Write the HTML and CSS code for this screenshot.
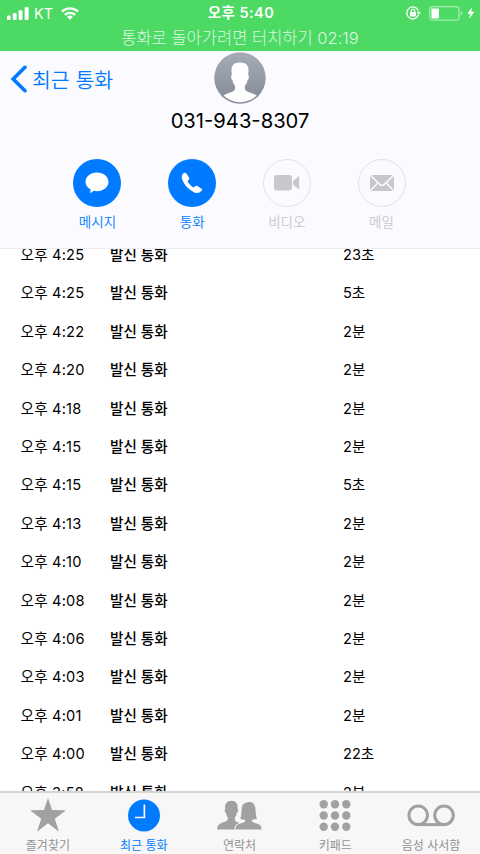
FILE: index.html
```html
<!DOCTYPE html>
<html lang="ko">
<head>
<meta charset="utf-8">
<title>최근 통화</title>
<link rel="stylesheet" href="styles.css">
</head>
<body>
<div class="phone">
  <header class="status">
    <div class="status-row">
      <div class="status-left">
        <svg class="signal" width="22" height="13" viewBox="0 0 22 13" fill="#fff"><rect x="0" y="8.5" width="3.6" height="4.5" rx="1"/><rect x="5.8" y="6" width="3.8" height="7" rx="1"/><rect x="11.6" y="3.2" width="3.8" height="9.8" rx="1"/><rect x="17.6" y="0" width="4" height="13" rx="1"/></svg>
        <span class="carrier">KT</span>
        <svg class="wifi" width="18" height="13" viewBox="0 0 18 13"><g fill="none" stroke="#fff" stroke-width="2.3"><path d="M.9 4.6a11.6 11.6 0 0 1 16.2 0"/><path d="M3.9 8a7.3 7.3 0 0 1 10.2 0"/></g><path d="M9 12.8 6.1 9.9a4.1 4.1 0 0 1 5.8 0z" fill="#fff"/></svg>
      </div>
      <span class="clock">오후 5:40</span>
      <div class="status-right">
        <svg width="15" height="14" viewBox="0 0 15 14"><path d="M12.6 8.4A6 6 0 1 1 12.3 4.6" fill="none" stroke="#fff" stroke-width="1.3"/><path d="M10.7 5.8H15l-2.2 2.9z" fill="#fff"/><rect x="4" y="6.1" width="5.9" height="4.3" rx=".6" fill="#fff"/><path d="M5.2 6.4V5a1.75 1.75 0 0 1 3.5 0v1.4" fill="none" stroke="#fff" stroke-width="1.1"/></svg>
        <svg class="battery" width="34" height="15" viewBox="0 0 34 15"><rect x=".7" y=".7" width="29.3" height="13.4" rx="2.7" fill="none" stroke="#fff" stroke-opacity=".5" stroke-width="1.2"/><rect x="2.4" y="2.4" width="7.6" height="10" rx=".8" fill="#fff"/><path d="M31.6 5q1.8.8 1.8 2.4t-1.8 2.4z" fill="#fff" fill-opacity=".5"/></svg>
        <svg class="bolt" width="8" height="12" viewBox="0 0 8 12"><path d="M5.3 0 .2 6.8h3.1L1.9 12l5.6-7.2H4.3z" fill="#fff"/></svg>
      </div>
    </div>
    <div class="return-call">통화로 돌아가려면 터치하기 02:19</div>
  </header>

  <section class="contact">
    <div class="back"><svg width="17" height="28" viewBox="0 0 17 28"><path d="M15 2.3 3.2 14 15 25.7" fill="none" stroke="#007aff" stroke-width="3.6" stroke-linecap="round"/></svg><span>최근 통화</span></div>
    <svg class="avatar" width="52" height="52" viewBox="0 0 52 52"><defs><linearGradient id="shade" x2="0" y2="1"><stop stop-color="#a5abb8"/><stop offset="1" stop-color="#858a96"/></linearGradient><clipPath id="disc"><circle cx="26" cy="26" r="24.2"/></clipPath></defs><circle cx="26" cy="26" r="25.7" fill="url(#shade)"/><path clip-path="url(#disc)" fill="#fff" d="M26 10.5c5.800 0 8.800 3 8.500 8.200-.1 2-.3 3-.3 4.300 1.100.2.800 4.800-.8 5.200-.4 3-1.300 4.300-2.500 5.600-.3 3.200.2 4.800 2.300 5.700 4 1.500 7 2.300 10 4.500V52H8.800v-8c3-2.200 6-3 10-4.500 2.100-.9 2.600-2.500 2.300-5.700-1.200-1.300-2.100-2.600-2.500-5.600-1.600-.4-1.900-5-.8-5.200 0-1.300-.2-2.300-.3-4.300-.3-5.200 2.700-8.200 8.500-8.200z"/></svg>
    <div class="number">031-943-8307</div>
    <nav class="actions">
      <div class="action"><div class="disc"><svg width="24" height="22" viewBox="0 0 24 22"><path d="M12 .5c6.400 0 11.500 4.100 11.500 9.300S18.400 19.200 12 19.200c-1.200 0-2.300-.1-3.400-.4-1 1.200-2.500 2-3.900 2.100.7-.8 1-2 .9-3.400C2.600 15.800.5 13 .5 9.800.5 4.600 5.600.5 12 .5z" fill="#fff"/></svg></div><span>메시지</span></div>
      <div class="action"><div class="disc"><svg width="22" height="22" viewBox="0 0 22 22"><path d="M1.700 2.100Q4.200-.5 5.500 1.700L8 5.500q1 1.500-1 3-.7.7 0 1.700 1.900 3 4.700 4.900 1 .6 1.700-.1 1.400-1.900 2.900-1l4 2.600q1.500 1 .1 2.500-2.600 2.900-6.500 1.600C8.200 18 3.200 13.200 1.200 7.600Q0 4.200 1.700 2.100z" fill="#fff"/></svg></div><span>통화</span></div>
      <div class="action off"><div class="disc"><svg width="26" height="16" viewBox="0 0 26 16"><rect width="18" height="15.500" rx="3" fill="#c7c7cc"/><path d="m19 6.200 5.200-4.700q1-.8 1 .4v11.700q0 1.200-1 .4L19 9.400z" fill="#c7c7cc"/></svg></div><span>비디오</span></div>
      <div class="action off"><div class="disc"><svg width="24" height="16" viewBox="0 0 24 16"><rect width="24" height="16" fill="#c7c7cc"/><path d="m0 0 10 9.600q2 1.600 4 0L24 0M0 16l8-8.200M24 16l-8-8.200" fill="none" stroke="#fafaff" stroke-width="1.500"/></svg></div><span>메일</span></div>
    </nav>
  </section>

  <main class="calls">
    <div class="call"><span>오후 4:25</span><b>발신 통화</b><span>23초</span></div>
    <div class="call"><span>오후 4:25</span><b>발신 통화</b><span>5초</span></div>
    <div class="call"><span>오후 4:22</span><b>발신 통화</b><span>2분</span></div>
    <div class="call"><span>오후 4:20</span><b>발신 통화</b><span>2분</span></div>
    <div class="call"><span>오후 4:18</span><b>발신 통화</b><span>2분</span></div>
    <div class="call"><span>오후 4:15</span><b>발신 통화</b><span>2분</span></div>
    <div class="call"><span>오후 4:15</span><b>발신 통화</b><span>5초</span></div>
    <div class="call"><span>오후 4:13</span><b>발신 통화</b><span>2분</span></div>
    <div class="call"><span>오후 4:10</span><b>발신 통화</b><span>2분</span></div>
    <div class="call"><span>오후 4:08</span><b>발신 통화</b><span>2분</span></div>
    <div class="call"><span>오후 4:06</span><b>발신 통화</b><span>2분</span></div>
    <div class="call"><span>오후 4:03</span><b>발신 통화</b><span>2분</span></div>
    <div class="call"><span>오후 4:01</span><b>발신 통화</b><span>2분</span></div>
    <div class="call"><span>오후 4:00</span><b>발신 통화</b><span>22초</span></div>
    <div class="call"><span>오후 3:58</span><b>발신 통화</b><span>2분</span></div>
  </main>

  <footer class="tabs">
    <div class="tab"><svg width="36" height="34" viewBox="0 0 36 34"><path d="m18 0 4.100 12.100 12.900.1q.6.300.1.800L24.800 20.700l3.900 12.100q0 .600-.6.300L18 25.300 7.900 33.100q-.6.300-.6-.3l3.900-12.100L.9 13q-.5-.5.1-.8l12.900-.1z" fill="#a1a1a1"/></svg><span>즐겨찾기</span></div>
    <div class="tab on"><svg width="34" height="34" viewBox="0 0 34 34"><circle cx="17" cy="17.500" r="16" fill="#007aff"/><path d="M17.400 6.500v13H8" fill="none" stroke="#fff" stroke-width="1.700"/></svg><span>최근 통화</span></div>
    <div class="tab"><svg width="46" height="34" viewBox="0 0 46 34"><g fill="#a1a1a1"><path d="M15.500 2.800c4.600 0 6.600 3 6.100 8 .8.600.5 3.600-.8 4.200-.4 2.400-1.100 3.400-1.900 4.500-.3 3 .3 3.900 2.500 4.700 3.700 1.400 6.300 2.400 6.900 7.300H1.200c.2-5.500 2.800-6 7.800-7.700 2.200-.8 3-1.600 2.800-4.200-.9-1.100-1.500-2.400-1.800-4.500-1.300-.6-1.600-3.600-.8-4.200-.5-5 1.700-8.100 6.300-8.100z"/><path stroke="#f7f7f7" stroke-width="2.400" paint-order="stroke" d="M31.500 4.200c5.200-.8 7.600 1.800 8 7.300.2 4.300.6 7.300 1.400 9.200-1.500.8-3.300 1-4.900 1-.2 2.300 1 2.800 4 3.600 4.200 1.200 5.500 2.700 5.600 6.200H19.500c.1-3.500 1.400-5 5.600-6.200 3-.8 4.200-1.300 4-3.600-1.600 0-3.400-.2-4.900-1 .8-1.900 1.300-4.900 1.400-9.200.2-4.500 2.500-7 5.900-7.300z"/></g></svg><span>연락처</span></div>
    <div class="tab"><svg width="34" height="34" viewBox="0 0 34 34" fill="#a1a1a1"><circle cx="5.700" cy="6.300" r="4.200"/><circle cx="17" cy="6.300" r="4.200"/><circle cx="28.300" cy="6.300" r="4.200"/><circle cx="5.700" cy="17.500" r="4.200"/><circle cx="17" cy="17.500" r="4.200"/><circle cx="28.300" cy="17.500" r="4.200"/><circle cx="5.700" cy="28.700" r="4.200"/><circle cx="17" cy="28.700" r="4.200"/><circle cx="28.300" cy="28.700" r="4.200"/></svg><span>키패드</span></div>
    <div class="tab"><svg width="50" height="34" viewBox="0 0 50 34" fill="none" stroke="#a1a1a1" stroke-width="3"><circle cx="12.200" cy="17.300" r="9.300"/><circle cx="38" cy="17.300" r="9.300"/><path d="M12.200 26.600H38"/></svg><span>음성 사서함</span></div>
  </footer>
</div>
</body>
</html>
```
FILE: styles.css
```css
* { box-sizing: border-box; }
body { margin: 0; font-family: Inter, "Noto Sans CJK KR", sans-serif; color: #000; }
svg { display: block; flex: none; }
span, b { white-space: nowrap; }
.phone { width: 480px; height: 854px; display: flex; flex-direction: column; overflow: hidden; background: #fff; }

.status { height: 51px; flex: none; background: #4cd964; color: #fff; }
.status-row { height: 26px; display: grid; grid-template-columns: 1fr auto 1fr; align-items: center; }
.status-left { display: flex; align-items: center; padding-left: 7px; }
.carrier { font-size: 14.5px; margin-left: 5px; letter-spacing: -.1px; }
.wifi { margin-left: 8px; }
.clock { font-size: 14.5px; font-weight: 600; line-height: 26px; letter-spacing: .45px; margin-left: 2px; }
.status-right { display: flex; align-items: center; justify-content: flex-end; padding-right: 5.5px; }
.battery { margin-left: 8px; }
.bolt { margin-left: 4px; }
.return-call { height: 24px; line-height: 25px; font-size: 16.5px; font-weight: 300; text-align: center; color: #dcf8e1; }

.contact { height: 198px; flex: none; display: grid; grid-template: 54px 56px 1fr / 1fr 52px 1fr; background: #fafaff; border-bottom: 1px solid #ececf0; }
.back { display: flex; align-items: center; padding: 2px 0 0 10px; gap: 5px; color: #007aff; font-size: 20.5px; font-weight: 350; }
.avatar { margin-top: 1px; }
.number { grid-column: 1 / -1; grid-row: 2; font-size: 20.2px; line-height: 32px; text-align: center; }
.actions { grid-column: 1 / -1; display: grid; grid-template-columns: repeat(4, 94.7px); justify-content: center; margin: -2.5px 1px 0 0; }
.action { display: flex; flex-direction: column; align-items: center; color: #007aff; font-size: 13.5px; font-weight: 350; line-height: 20px; gap: 5px; }
.disc { width: 48px; height: 48px; border-radius: 50%; display: flex; align-items: center; justify-content: center; background: #007aff; }
.off { color: #c7c7cc; }
.off .disc { background: none; border: 1.500px solid #e2e2e7; }

.calls { flex: 1; min-height: 0; overflow: hidden; }
.call { height: 38.4px; display: grid; grid-template-columns: 89.5px 233px 1fr; align-items: center; padding-left: 20.5px; font-size: 14.6px; font-weight: 400; line-height: 22px; }
.call:first-child { margin-top: -13.1px; }
.call span:first-child { letter-spacing: .2px; }
.call b { font-weight: 500; }

.tabs { height: 63px; flex: none; display: grid; grid-template-columns: repeat(5, 1fr); background: #f7f7f7; border-top: 2px solid #d5d5d5; padding-right: 1px; }
.tab { display: flex; flex-direction: column; align-items: center; padding-top: 5px; gap: 4px; color: #929292; font-size: 12px; line-height: 20px; }
.on { color: #007aff; }
```
